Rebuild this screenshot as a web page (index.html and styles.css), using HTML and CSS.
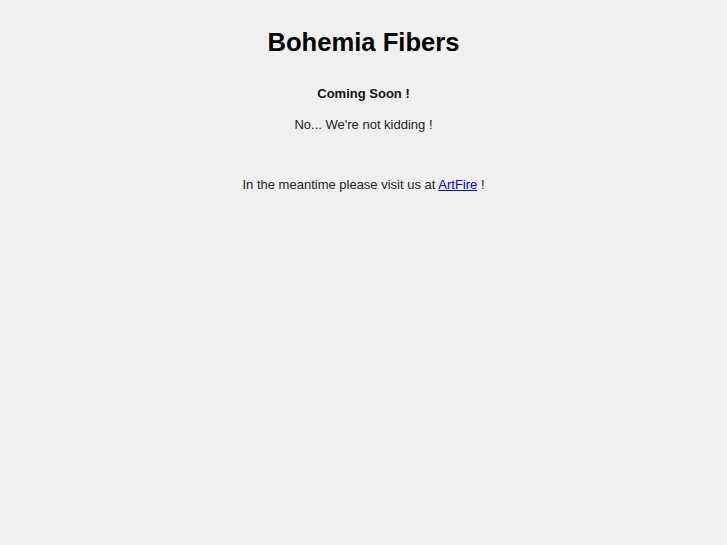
FILE: index.html
```html
<!DOCTYPE html>
<html lang="en">
<head>
    <meta charset="UTF-8">
    <title>Bohemia Fibers</title>
    <link rel="stylesheet" href="styles.css">
</head>
<body>
    <div class="page">
        <h1 class="title">Bohemia Fibers</h1>
        <p class="soon">Coming Soon !</p>
        <p class="note">No... We're not kidding !</p>
        <p class="visit">In the meantime please visit us at <a href="#">ArtFire</a> !</p>
    </div>
</body>
</html>
```

FILE: styles.css
```css
* {
    margin: 0;
    padding: 0;
    box-sizing: border-box;
}

body {
    background-color: #f0f0f0;
    color: #222222;
    font-family: "Liberation Sans", Arial, sans-serif;
    font-size: 13px;
    line-height: 16px;
}

.page {
    text-align: center;
    padding-top: 27px;
}

.title {
    font-size: 25.6px;
    line-height: 30px;
    font-weight: 700;
    color: #000000;
    margin-bottom: 29px;
}

.soon {
    font-weight: 700;
    color: #111111;
    margin-bottom: 15px;
}

.note {
    margin-bottom: 44px;
}

.visit a {
    color: #0000ee;
}
```
